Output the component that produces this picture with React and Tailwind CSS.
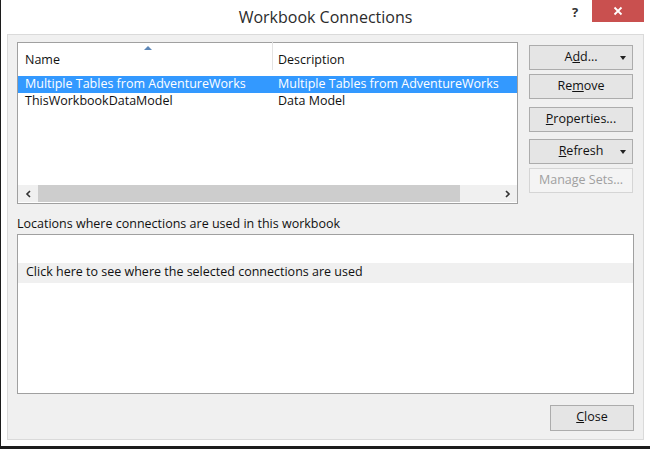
import { useState } from 'react';

const font = { fontFamily: '"Open Sans", "Noto Sans", sans-serif' };

function DialogButton({ children, dropdown, disabled, className = '' }) {
  return (
    <button
      className={
        'relative flex h-[25px] w-[104px] items-center justify-center border text-[12.5px] ' +
        (disabled
          ? 'border-[#d5d5d5] bg-[#f4f4f4] text-[#a0a0a0]'
          : 'border-[#acacac] bg-[#e5e5e5] text-[#111]') +
        ' ' +
        className
      }
    >
      {children}
      {dropdown && (
        <span className="absolute right-[6px] top-[10px] h-0 w-0 border-x-[3px] border-t-[4px] border-x-transparent border-t-[#222]" />
      )}
    </button>
  );
}

export default function App() {
  const [selected, setSelected] = useState(0);
  const rows = [
    ['Multiple Tables from AdventureWorks', 'Multiple Tables from AdventureWorks'],
    ['ThisWorkbookDataModel', 'Data Model'],
  ];

  return (
    <div className="h-[449px] w-[650px] bg-[#1c1c1c] pb-[3px] pl-[1px]" style={font}>
      <div className="flex h-full flex-col bg-white">
        {/* title bar */}
        <div className="relative flex h-[34px] shrink-0 items-center justify-center">
          <span className="text-[16px] text-[#2b2b2b]">Workbook Connections</span>
          <span className="absolute left-[571px] top-[3px] text-[13px] font-bold text-[#333]">?</span>
          <div className="absolute right-[6px] top-0 flex h-[22px] w-[52px] items-center justify-center bg-[#c9504f]">
            <svg width="10" height="10" viewBox="0 0 10 10">
              <path d="M1.5 1.5 L8.5 8.5 M8.5 1.5 L1.5 8.5" stroke="white" strokeWidth="1.8" />
            </svg>
          </div>
        </div>

        {/* client area */}
        <div className="mb-[6px] ml-[6px] mr-[6px] flex flex-1 flex-col border border-[#dadada] bg-[#f0f0f0] pl-[9px] pr-[8px] pt-[7px]">
          <div className="flex gap-[11px]">
            {/* connections list */}
            <div className="flex h-[162px] w-[501px] flex-col border border-[#a0a0a0] bg-white">
              <div className="relative flex h-[33px] shrink-0 items-end pb-[6px] text-[12.5px] text-[#111]">
                <span className="absolute left-[126px] top-[3px] h-0 w-0 border-x-[4px] border-b-[4px] border-x-transparent border-b-[#5d87b8]" />
                <div className="w-[254px] pl-[7px]">Name</div>
                <div className="h-[29px] self-end border-l border-[#e3e3e3]" />
                <div className="pl-[5px]">Description</div>
              </div>
              {rows.map((r, i) => (
                <div
                  key={r[0]}
                  onClick={() => setSelected(i)}
                  className={
                    'flex h-[17px] items-center text-[12.5px] ' +
                    (selected === i ? 'bg-[#3399ff] text-white' : 'text-[#111]')
                  }
                >
                  <div className="w-[254px] pl-[7px]">{r[0]}</div>
                  <div className="pl-[6px]">{r[1]}</div>
                </div>
              ))}
              <div className="flex-1" />
              <div className="mb-[1px] flex h-[17px] items-center bg-[#f0f0f0]">
                <span className="flex w-[20px] justify-center">
                  <svg width="7" height="8" viewBox="0 0 7 8">
                    <path d="M5 1 L2 4 L5 7" stroke="#333" strokeWidth="1.6" fill="none" />
                  </svg>
                </span>
                <div className="h-[17px] w-[422px] bg-[#cdcdcd]" />
                <div className="flex-1" />
                <span className="flex w-[20px] justify-center">
                  <svg width="7" height="8" viewBox="0 0 7 8">
                    <path d="M2 1 L5 4 L2 7" stroke="#333" strokeWidth="1.6" fill="none" />
                  </svg>
                </span>
              </div>
            </div>

            {/* buttons */}
            <div className="flex flex-col pt-[3px]">
              <DialogButton dropdown>
                A<u>d</u>d...
              </DialogButton>
              <DialogButton className="mt-[4px]">
                Re<u>m</u>ove
              </DialogButton>
              <DialogButton className="mt-[8px]">
                <u>P</u>roperties...
              </DialogButton>
              <DialogButton dropdown className="mt-[7px]">
                <u>R</u>efresh
              </DialogButton>
              <DialogButton disabled className="mt-[4px]">
                Manage Sets...
              </DialogButton>
            </div>
          </div>

          <div className="mt-[11px] text-[12.5px] text-[#111]">
            Locations where connections are used in this workbook
          </div>
          <div className="mt-0 flex h-[160px] w-[617px] flex-col border border-[#a0a0a0] bg-white">
            <div className="h-[28px]" />
            <div className="flex h-[20px] items-center bg-[#f0f0f0] pl-[8px] text-[12.5px] text-[#111]">
              Click here to see where the selected connections are used
            </div>
          </div>

          <div className="mt-[11px] flex justify-end pr-[1px]">
            <button className="flex h-[26px] w-[84px] items-center justify-center border border-[#acacac] bg-[#e5e5e5] text-[12.5px] text-[#111]">
              <u>C</u>lose
            </button>
          </div>
        </div>
      </div>
    </div>
  );
}
